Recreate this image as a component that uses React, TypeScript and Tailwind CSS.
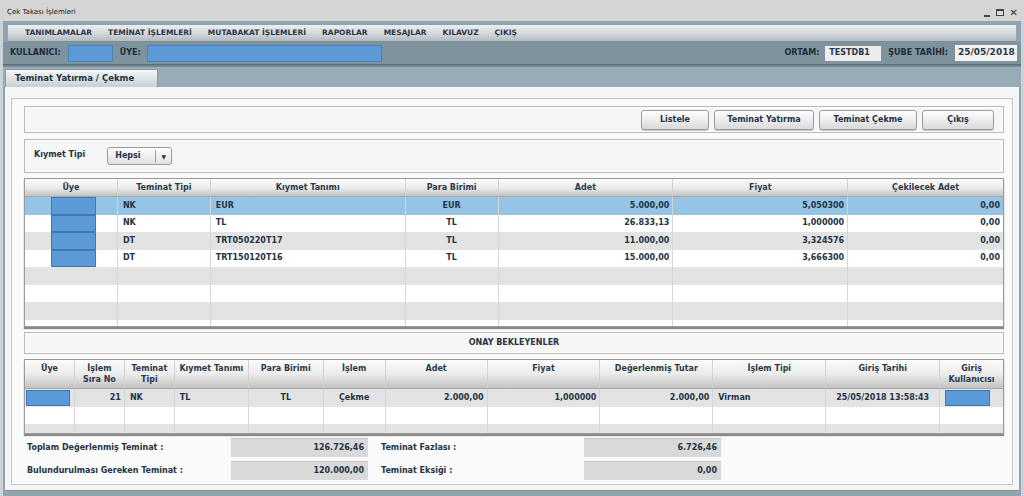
import React from 'react'

const font = { fontFamily: '"DejaVu Sans", Verdana, sans-serif' }

const menu = ['TANIMLAMALAR', 'TEMİNAT İŞLEMLERİ', 'MUTABAKAT İŞLEMLERİ', 'RAPORLAR', 'MESAJLAR', 'KILAVUZ', 'ÇIKIŞ']

type Col = { title: string[]; w: number; align: 'left' | 'center' | 'right' }

const cols1: Col[] = [
  { title: ['Üye'], w: 93, align: 'center' },
  { title: ['Teminat Tipi'], w: 93, align: 'left' },
  { title: ['Kıymet Tanımı'], w: 195, align: 'left' },
  { title: ['Para Birimi'], w: 93, align: 'center' },
  { title: ['Adet'], w: 175, align: 'right' },
  { title: ['Fiyat'], w: 175, align: 'right' },
  { title: ['Çekilecek Adet'], w: 155, align: 'right' },
]

const rows1 = [
  ['', 'NK', 'EUR', 'EUR', '5.000,00', '5,050300', '0,00'],
  ['', 'NK', 'TL', 'TL', '26.833,13', '1,000000', '0,00'],
  ['', 'DT', 'TRT050220T17', 'TL', '11.000,00', '3,324576', '0,00'],
  ['', 'DT', 'TRT150120T16', 'TL', '15.000,00', '3,666300', '0,00'],
]

const cols2: Col[] = [
  { title: ['Üye'], w: 50, align: 'center' },
  { title: ['İşlem', 'Sıra No'], w: 50, align: 'right' },
  { title: ['Teminat', 'Tipi'], w: 50, align: 'left' },
  { title: ['Kıymet Tanımı'], w: 74, align: 'left' },
  { title: ['Para Birimi'], w: 75, align: 'center' },
  { title: ['İşlem'], w: 62, align: 'center' },
  { title: ['Adet'], w: 102, align: 'right' },
  { title: ['Fiyat'], w: 113, align: 'right' },
  { title: ['Değerlenmiş Tutar'], w: 113, align: 'right' },
  { title: ['İşlem Tipi'], w: 113, align: 'left' },
  { title: ['Giriş Tarihi'], w: 114, align: 'center' },
  { title: ['Giriş', 'Kullanıcısı'], w: 63, align: 'left' },
]

const rows2 = [['', '21', 'NK', 'TL', 'TL', 'Çekme', '2.000,00', '1,000000', '2.000,00', 'Virman', '25/05/2018 13:58:43', '']]

const alignClass = { left: 'justify-start pl-[5px]', center: 'justify-center', right: 'justify-end pr-[3px]' }

function UserBox({ className = '' }: { className?: string }) {
  return <div className={`bg-[#5b9ad6] border border-[#3f78b4] ${className}`} />
}

function Button({ label, w }: { label: string; w: number }) {
  return (
    <button
      className="h-[20px] rounded-[3px] border border-[#9b9b9b] bg-gradient-to-b from-white to-[#dadada] text-[8px] font-bold text-[#243444] shadow-[0_1px_0_#c4c4c4]"
      style={{ width: w }}
    >
      {label}
    </button>
  )
}

function Grid({
  cols,
  rows,
  headH,
  height,
  total,
  firstSelected,
  userBoxes,
}: {
  cols: Col[]
  rows: string[][]
  headH: number
  height: number
  total: number
  firstSelected: boolean
  userBoxes: Record<number, string>
}) {
  const all = Array.from({ length: total }, (_, i) => rows[i] ?? cols.map(() => ''))
  return (
    <div
      className="border border-[#9a9a9a] bg-white overflow-hidden shadow-[0_2px_1px_#8a8a8a]"
      style={{ height }}
    >
      <div className="flex bg-gradient-to-b from-[#fbfbfb] via-[#ececec] to-[#c3c3c3] border-b border-[#a8a8a8]" style={{ height: headH }}>
        {cols.map((c, i) => (
          <div
            key={i}
            className="flex flex-col items-center pt-[4px] border-r border-[#d2d2d2] last:border-r-0 text-[8px] font-bold leading-[10.5px] text-[#2a3a4a]"
            style={{ width: c.w }}
          >
            {c.title.map((t) => (
              <span key={t}>{t}</span>
            ))}
          </div>
        ))}
      </div>
      {all.map((r, ri) => {
        const bg = firstSelected && ri === 0 ? 'bg-[#95c4e6]' : ri % 2 === 0 ? 'bg-[#e3e3e3]' : 'bg-white'
        return (
          <div key={ri} className={`flex h-[17.5px] ${bg}`}>
            {cols.map((c, ci) => (
              <div
                key={ci}
                className={`flex items-center border-r border-[#d6d6d6] last:border-r-0 text-[8px] font-bold text-[#243444] whitespace-nowrap ${alignClass[c.align]}`}
                style={{ width: c.w }}
              >
                {userBoxes[ci] && ri < rows.length ? <UserBox className={userBoxes[ci]} /> : r[ci]}
              </div>
            ))}
          </div>
        )
      })}
    </div>
  )
}

function Panel({ children, className = '' }: { children?: React.ReactNode; className?: string }) {
  return <div className={`border border-[#b9b9b9] bg-[#f6f6f6] shadow-[inset_0_0_0_1px_#ffffff] ${className}`}>{children}</div>
}

function Box({ value }: { value: string }) {
  return (
    <div className="h-[19px] bg-[#d9d9d9] border-t border-[#c4c4c4] flex items-center justify-end pr-[4px]">{value}</div>
  )
}

export default function App() {
  return (
    <div className="w-[1024px] h-[496px] overflow-hidden bg-[#8fa4ae] flex flex-col" style={font}>
      {/* title bar */}
      <div className="h-[21px] bg-[#d5d5d5] flex items-center justify-between pl-[7px] pr-[6px]">
        <span className="text-[7px] text-[#222] pt-[3px]">Çek Takası İşlemleri</span>
        <div className="flex items-center gap-[6px] text-[#333] pt-[4px]">
          <span className="w-[6px] h-[2px] bg-[#444] mt-[6px]" />
          <span className="w-[8px] h-[7px] border border-[#444] border-t-2" />
          <span className="text-[10px] leading-none">✕</span>
        </div>
      </div>

      <div className="flex-1 flex flex-col border-l-[3px] border-r-[3px] border-[#c9d3d8]">
        {/* menu */}
        <div className="px-[5px] pt-[4px]">
          <div className="h-[17px] flex items-center gap-[16px] pl-[17px] bg-gradient-to-b from-[#eceef0] via-[#d6dadd] to-[#b3bbc0] border-b border-[#7c8e98] text-[7.5px] font-bold text-[#2a3644]">
            {menu.map((m) => (
              <span key={m}>{m}</span>
            ))}
          </div>
        </div>

        {/* user row */}
        <div className="h-[22px] bg-[#7e939e] flex items-center pl-[7px] pr-[4px] text-[8px] font-bold text-[#1f2c38]">
          <span>KULLANICI:</span>
          <div className="ml-[7px] w-[45px] h-[17px] bg-[#5b9ad6] border border-[#4a82b9]" />
          <span className="ml-[7px]">ÜYE:</span>
          <div className="ml-[6px] w-[235px] h-[17px] bg-[#5b9ad6] border border-[#4a82b9]" />
          <div className="flex-1" />
          <span>ORTAM:</span>
          <div className="ml-[6px] w-[56px] h-[15px] bg-[#ececec] flex items-center pl-[4px] text-[#2a3a4a]">TESTDB1</div>
          <span className="ml-[7px]">ŞUBE TARİHİ:</span>
          <div className="ml-[7px] w-[62px] h-[16px] bg-[#f3f3f3] flex items-center pl-[3px] text-[9px] text-[#2a3a4a]">25/05/2018</div>
        </div>
        <div className="h-[3px] bg-gradient-to-b from-[#5a6a73] to-[#8293a0]" />

        {/* tabs */}
        <div className="h-[20px] bg-[#97acb6] flex items-end pl-[2px]">
          <div className="w-[153px] h-[18px] bg-gradient-to-b from-[#f4f5f6] to-[#c8d0d4] border border-[#8a9aa3] border-b-0 flex items-center pl-[9px] text-[8.5px] font-bold text-[#24323e]">
            Teminat Yatırma / Çekme
          </div>
        </div>

        {/* content */}
        <div className="flex-1 mx-[2px] bg-[#f5f5f5] pt-[11px] px-[6px] pb-[5px] border-b border-[#8d8d8d]">
          <div className="h-full border border-[#c6c6c6] bg-[#fafafa] pl-[12px] pr-[8px] pt-[7px] flex flex-col">
            <Panel className="h-[27px] flex items-center justify-end gap-[5px] pr-[9px]">
              <Button label="Listele" w={68} />
              <Button label="Teminat Yatırma" w={100} />
              <Button label="Teminat Çekme" w={98} />
              <Button label="Çıkış" w={72} />
            </Panel>

            <Panel className="mt-[6px] h-[34px] flex items-center pl-[9px]">
              <span className="text-[8px] font-bold text-[#243444] mb-[3px]">Kıymet Tipi</span>
              <div className="ml-[22px] w-[65px] h-[18px] rounded-[3px] border border-[#9a9a9a] bg-gradient-to-b from-white to-[#e0e0e0] flex items-center text-[8px] font-bold text-[#243444]">
                <span className="flex-1 pl-[7px]">Hepsi</span>
                <span className="w-[16px] h-[12px] border-l border-[#9a9a9a] flex items-center justify-center text-[6px]">▼</span>
              </div>
            </Panel>

            <div className="mt-[5px]">
              <Grid
                cols={cols1}
                rows={rows1}
                headH={18}
                height={149}
                total={8}
                firstSelected
                userBoxes={{ 0: 'w-[45px] h-[17.5px] ml-[6px]' }}
              />
            </div>

            <Panel className="mt-[5px] h-[22px] flex items-center justify-center">
              <span className="text-[8px] font-bold text-[#243444]">ONAY BEKLEYENLER</span>
            </Panel>

            <div className="mt-[5px]">
              <Grid
                cols={cols2}
                rows={rows2}
                headH={29}
                height={75}
                total={3}
                firstSelected={false}
                userBoxes={{ 0: 'w-[44px] h-[16px] ml-[-3px]', 11: 'w-[45px] h-[16px]' }}
              />
            </div>

            <div className="mt-[4px] grid grid-cols-[207px_137px_13px_203px_137px] gap-y-[4px] items-center text-[8px] font-bold text-[#243444]">
              <span className="pl-[3px]">Toplam Değerlenmiş Teminat :</span>
              <Box value="126.726,46" />
              <span />
              <span>Teminat Fazlası :</span>
              <Box value="6.726,46" />
              <span className="pl-[3px]">Bulundurulması Gereken Teminat :</span>
              <Box value="120.000,00" />
              <span />
              <span>Teminat Eksiği :</span>
              <Box value="0,00" />
            </div>
          </div>
        </div>
        <div className="h-[5px]" />
      </div>
    </div>
  )
}
